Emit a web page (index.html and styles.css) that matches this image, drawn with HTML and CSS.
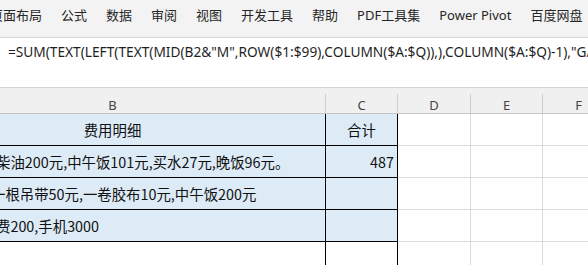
FILE: index.html
```html
<!DOCTYPE html>
<html lang="zh">
<head>
<meta charset="utf-8">
<title>Excel</title>
<link rel="stylesheet" href="styles.css">
</head>
<body>
<div class="ribbon">
  <span class="tab">页面布局</span>
  <span class="tab">公式</span>
  <span class="tab">数据</span>
  <span class="tab">审阅</span>
  <span class="tab">视图</span>
  <span class="tab">开发工具</span>
  <span class="tab">帮助</span>
  <span class="tab">PDF工具集</span>
  <span class="tab">Power Pivot</span>
  <span class="tab">百度网盘</span>
</div>
<div class="formula"><span class="ftext">=SUM(TEXT(LEFT(TEXT(MID(B2&amp;"M",ROW($1:$99),COLUMN($A:$Q)),),COLUMN($A:$Q)-1),"G/通用格式;;0;!0")*ISERR(-MID(B2&amp;"M",ROW($1:$99)-1,2)))</span></div>
<div class="band"></div>
<div class="sheet">
  <div class="hd">B</div>
  <div class="hd">C</div>
  <div class="hd">D</div>
  <div class="hd">E</div>
  <div class="hd">F</div>

  <div class="c fill bk center">费用明细</div>
  <div class="c fill bk center">合计</div>
  <div class="c"></div>
  <div class="c"></div>
  <div class="c"></div>

  <div class="c fill bk txt">柴油200元,中午饭101元,买水27元,晚饭96元。</div>
  <div class="c fill bk num">487</div>
  <div class="c"></div>
  <div class="c"></div>
  <div class="c"></div>

  <div class="c fill bk txt shift">一根吊带50元,一卷胶布10元,中午饭200元</div>
  <div class="c fill bk"></div>
  <div class="c"></div>
  <div class="c"></div>
  <div class="c"></div>

  <div class="c fill bk txt">费200,手机3000</div>
  <div class="c fill bk"></div>
  <div class="c"></div>
  <div class="c"></div>
  <div class="c"></div>

  <div class="c bkr"></div>
  <div class="c bkr"></div>
  <div class="c"></div>
  <div class="c"></div>
  <div class="c"></div>
</div>
</body>
</html>
```
FILE: styles.css
```css
html, body {
  margin: 0;
  padding: 0;
}
body {
  width: 588px;
  height: 265px;
  overflow: hidden;
  background: #ffffff;
  font-family: "Noto Sans", "Noto Sans CJK SC", sans-serif;
}
.ribbon {
  background: #f3f3f3;
  border-bottom: 1px solid #d6d6d6;
  display: flex;
  align-items: flex-start;
  gap: 19px;
  margin-left: -10px;
  padding-top: 5px;
  box-sizing: border-box;
  height: 38px;
  font-size: 13px;
  line-height: 20px;
  color: #262626;
  white-space: nowrap;
}
.formula {
  height: 50px;
  box-sizing: border-box;
  border-bottom: 1px solid #d4d4d4;
  background: #ffffff;
  padding: 4px 0 0 8px;
  font-size: 13.7px;
  line-height: 20px;
  color: #1f1f1f;
  white-space: nowrap;
  overflow: hidden;
}
.band {
  height: 6px;
  background: #f0f0f0;
}
.sheet {
  display: grid;
  grid-template-columns: 426px 72px 73px 72px 72px;
  grid-template-rows: 20px repeat(5, 32px);
  margin-left: -100px;
  font-family: "Noto Sans CJK SC", sans-serif;
  font-size: 14.4px;
  color: #111;
}
.hd {
  background: #f0f0f0;
  border-right: 1px solid #cfcfcf;
  border-bottom: 1px solid #c4c4c4;
  box-sizing: border-box;
  text-align: center;
  font-family: "Noto Sans", sans-serif;
  font-size: 13px;
  line-height: 18px;
  padding-top: 2px;
  color: #444;
}
.c {
  box-sizing: border-box;
  border-right: 1px solid #dadada;
  border-bottom: 1px solid #dadada;
  line-height: 31px;
  white-space: nowrap;
  overflow: visible;
}
.fill {
  background: #ddebf7;
}
.bk {
  border-right-color: #000;
  border-bottom-color: #000;
}
.bkr {
  border-right-color: #000;
}
.center {
  text-align: center;
}
.txt {
  padding-left: 96px;
}
.txt.shift {
  padding-left: 91px;
}
.num {
  text-align: right;
  padding-right: 3px;
}
```
